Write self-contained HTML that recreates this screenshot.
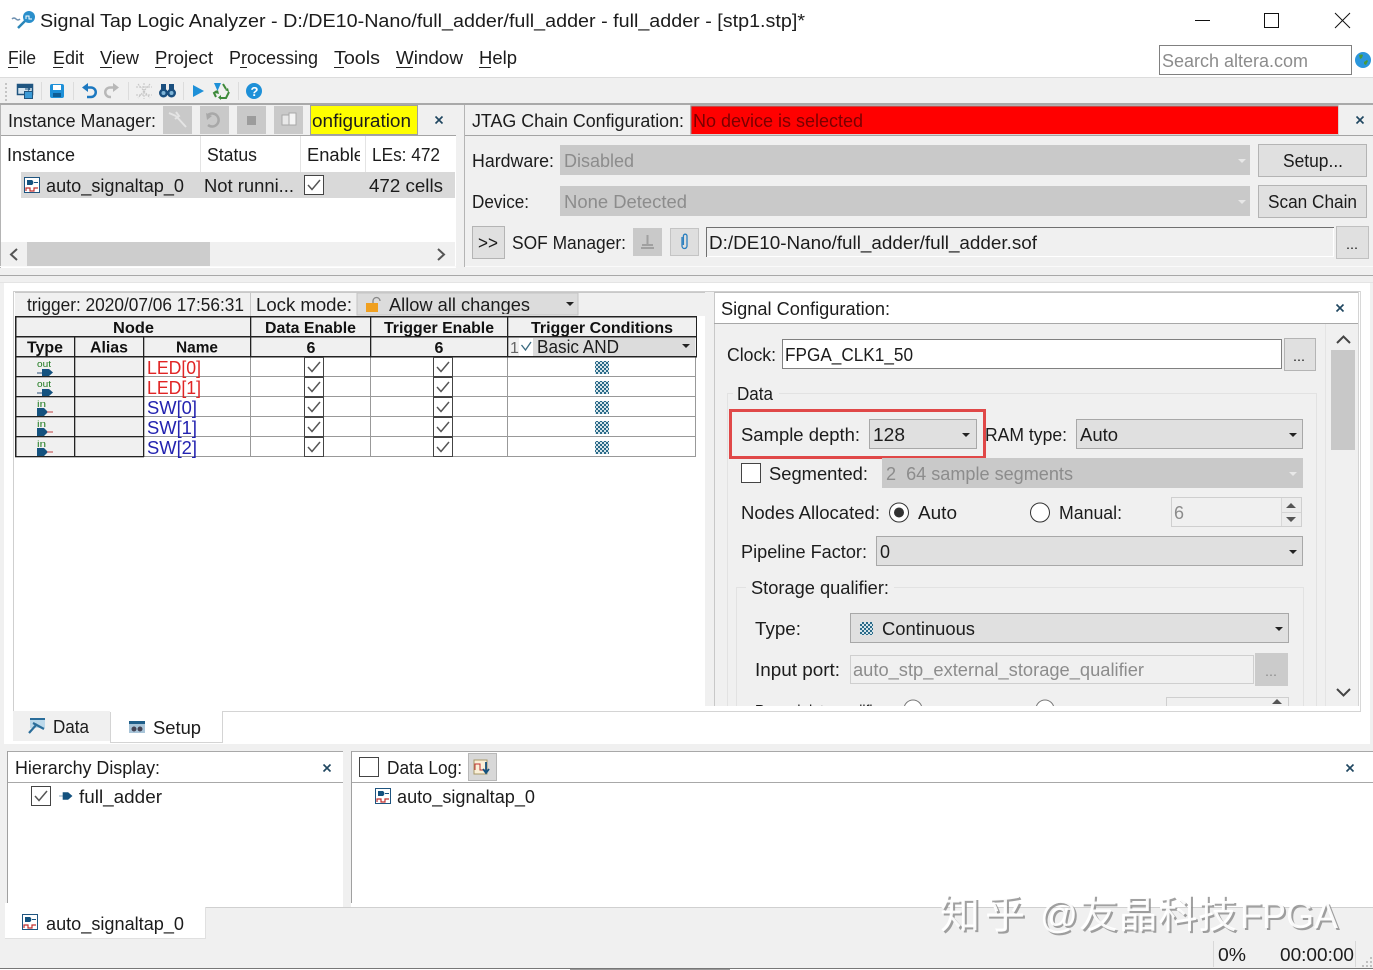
<!DOCTYPE html>
<html lang="en">
<head>
<meta charset="utf-8">
<title>Signal Tap Logic Analyzer</title>
<style>
html,body{margin:0;padding:0;background:#f0f0f0;width:1373px;height:970px;overflow:hidden}
svg{display:block}
text{font-family:"Liberation Sans","Noto Sans CJK SC",sans-serif;font-size:18px;fill:#1c1c1c}
.b{font-weight:bold;font-size:16px;fill:#111}
.d{fill:#8c8c8c}
.r{fill:#e02525}
.u{fill:#2323b0}
.s{font-size:9px;fill:#1f7a1f}
</style>
</head>
<body>
<svg xmlns="http://www.w3.org/2000/svg" width="1373" height="970" viewBox="0 0 1373 970">
<defs>
<pattern id="pt" width="4" height="4" patternUnits="userSpaceOnUse">
<rect width="4" height="4" fill="#d6e4ea"/><rect width="2" height="2" fill="#2a6a88"/><rect x="2" y="2" width="2" height="2" fill="#2a6a88"/>
</pattern>
<symbol id="st" width="16" height="16" viewBox="0 0 16 16">
<rect x=".5" y=".5" width="15" height="15" fill="#fff" stroke="#1f5580"/>
<path d="M3 3H8A3 3 0 0 1 8 8H3Z" fill="#14527f"/><path d="M10 5.500H14" stroke="#14527f"/>
<path d="M2 14V11H6V14H10V11H14" fill="none" stroke="#c0302f" stroke-width="1.200"/>
</symbol>
<symbol id="chk" width="20" height="20" viewBox="0 0 20 20">
<rect x=".5" y=".5" width="19" height="19" fill="#fff" stroke="#444"/>
<path d="M4 10L8 14.500L16 5" fill="none" stroke="#555" stroke-width="1.500"/>
</symbol>
<symbol id="x" width="10" height="10" viewBox="0 0 10 10">
<path d="M1.500 1.500L8.500 8.500M8.500 1.500L1.500 8.500" stroke="#1f4660" stroke-width="1.600"/>
</symbol>
<clipPath id="c1"><rect x="357" y="293" width="221" height="21"/></clipPath>
<clipPath id="c2"><rect x="714" y="324" width="620" height="382"/></clipPath>
<clipPath id="c3"><rect x="307" y="140" width="53" height="30"/></clipPath>
</defs>

<!-- base -->
<rect width="1373" height="970" fill="#f0f0f0"/>
<rect width="1373" height="77" fill="#fff"/>
<rect y="77" width="1373" height="1" fill="#dcdcdc"/>

<!-- title bar -->
<g fill="none">
<path d="M12 19q2-2 4 0t4 0" stroke="#6d8fb0" stroke-width="1.500"/>
<path d="M18 28L25 21" stroke="#2b86b8" stroke-width="2.500"/>
<circle cx="29" cy="17" r="6" fill="#2a8fcb"/>
<path d="M26 19V16H29V19H32" stroke="#fff"/>
</g>
<text x="40" y="27" textLength="765" lengthAdjust="spacingAndGlyphs">Signal Tap Logic Analyzer - D:/DE10-Nano/full_adder/full_adder - full_adder - [stp1.stp]*</text>
<path d="M1195 20.500H1210" stroke="#111"/>
<rect x="1264.500" y="13.500" width="14" height="14" fill="none" stroke="#111"/>
<path d="M1335 13L1350 28M1350 13L1335 28" stroke="#111"/>

<!-- menu -->
<text x="8" y="64" textLength="28" lengthAdjust="spacingAndGlyphs">File</text>
<text x="53" y="64" textLength="31" lengthAdjust="spacingAndGlyphs">Edit</text>
<text x="100" y="64" textLength="39" lengthAdjust="spacingAndGlyphs">View</text>
<text x="155" y="64" textLength="58" lengthAdjust="spacingAndGlyphs">Project</text>
<text x="229" y="64" textLength="89" lengthAdjust="spacingAndGlyphs">Processing</text>
<text x="334" y="64" textLength="46" lengthAdjust="spacingAndGlyphs">Tools</text>
<text x="396" y="64" textLength="67" lengthAdjust="spacingAndGlyphs">Window</text>
<text x="479" y="64" textLength="38" lengthAdjust="spacingAndGlyphs">Help</text>
<g fill="#222">
<rect x="8" y="67" width="10" height="1"/><rect x="53" y="67" width="10" height="1"/><rect x="100" y="67" width="12" height="1"/><rect x="155" y="67" width="11" height="1"/><rect x="240" y="67" width="7" height="1"/><rect x="334" y="67" width="10" height="1"/><rect x="396" y="67" width="17" height="1"/><rect x="479" y="67" width="12" height="1"/>
</g>
<rect x="1159.500" y="45.500" width="192" height="29" fill="#fff" stroke="#808080"/>
<text class="d" x="1162" y="67" textLength="146" lengthAdjust="spacingAndGlyphs">Search altera.com</text>
<circle cx="1363" cy="60" r="8" fill="#2a96dc"/>
<path d="M1359 55q3-1 4 0l-1 3-2 1zM1364 62l3-2 1 1-2 4-2-1z" fill="#4a9a3a"/>

<!-- toolbar -->
<g fill="#c4c4c4"><rect x="5" y="83" width="2" height="2"/><rect x="5" y="87" width="2" height="2"/><rect x="5" y="91" width="2" height="2"/><rect x="5" y="95" width="2" height="2"/><rect x="5" y="99" width="2" height="2"/></g>
<g fill="#dcdcdc"><rect x="41" y="82" width="1" height="18"/><rect x="73" y="82" width="1" height="18"/><rect x="128" y="82" width="1" height="18"/><rect x="183" y="82" width="1" height="18"/><rect x="238" y="82" width="1" height="18"/></g>
<rect x="17.500" y="84.500" width="15" height="10" fill="#d5e4ee" stroke="#1f5580" stroke-width="1.500"/>
<rect x="18" y="85" width="14" height="3" fill="#1f5580"/>
<rect x="24.500" y="91.500" width="8" height="7" fill="#3b9ad5" stroke="#1f5580"/>
<path d="M25 89h5m-2-1.500l2 1.500-2 1.500" stroke="#1f5580" fill="none"/>
<rect x="50" y="84" width="14" height="14" rx="2" fill="#1e90d8"/><rect x="53" y="85" width="8" height="5" fill="#fff"/><rect x="53" y="93" width="8" height="4" fill="#0e5d95"/>
<path d="M86 87.500H91A4.500 4.500 0 0 1 91 97H87" fill="none" stroke="#1c78c0" stroke-width="2.500"/><path d="M82 87.500L88 83V92Z" fill="#1c78c0"/>
<path d="M115 87.500H110A4.500 4.500 0 0 0 110 97H111" fill="none" stroke="#b8b8b8" stroke-width="2.500"/><path d="M119 87.500L113 83V92Z" fill="#b8b8b8"/>
<path d="M144 83V99M136 87H152M136 95H152M138 84L150 98M150 84L138 98" stroke="#c4c4c4" stroke-dasharray="2 1" fill="none"/>
<rect x="161" y="84" width="5" height="7" fill="#1a4f7f"/><rect x="169" y="84" width="5" height="7" fill="#1a4f7f"/><circle cx="163.500" cy="93" r="4.500" fill="#1a4f7f"/><circle cx="171.500" cy="93" r="4.500" fill="#1a4f7f"/><circle cx="163.500" cy="93" r="2" fill="#7fb5d8"/><circle cx="171.500" cy="93" r="2" fill="#7fb5d8"/>
<path d="M193 85L204 91L193 97Z" fill="#1e90d8"/>
<path d="M214 83H221L217.500 91Z" fill="#1e90d8"/>
<path d="M223 84L226 89M229 92L226 98H221M216 97L214 93L217 91" fill="none" stroke="#3e8a3a" stroke-width="2"/>
<path d="M225 90l3-2 1 4zM221 95v5l-3-2.500zM219 94l-4-1 3-3z" fill="#3e8a3a"/>
<circle cx="254" cy="91" r="8" fill="#1e90d8"/>
<text x="250.500" y="96" style="font-size:13px;font-weight:bold;fill:#fff">?</text>

<rect y="103" width="1373" height="2" fill="#a9a9a9"/>

<!-- instance manager -->
<rect x="0" y="105" width="456" height="163" fill="#fff"/>
<rect x="0" y="105" width="456" height="30" fill="#f0f0f0"/>
<rect y="135" width="456" height="1" fill="#a4a4a4"/>
<rect y="105" width="1" height="163" fill="#b4b4b4"/>
<text x="8" y="127" textLength="148" lengthAdjust="spacingAndGlyphs">Instance Manager:</text>
<g fill="#c9c9c9"><rect x="163" y="106" width="29" height="28"/><rect x="200" y="106" width="29" height="28"/><rect x="237" y="106" width="29" height="28"/><rect x="274" y="106" width="29" height="28"/></g>
<path d="M169 113L176 116M176 116L186 127M176 112l3 4-4 3" stroke="#e4e4e4" stroke-width="2" fill="none"/>
<path d="M208 115A6.500 6.500 0 1 1 208 125" stroke="#a8a8a8" stroke-width="2.500" fill="none"/><path d="M206 113L212 116L207 120Z" fill="#a8a8a8"/>
<rect x="247" y="116" width="9" height="9" fill="#9c9c9c"/>
<rect x="282" y="115" width="7" height="10" fill="#e8e8e8" stroke="#a8a8a8"/><rect x="289" y="113" width="7" height="12" fill="#f4f4f4" stroke="#a8a8a8"/>
<rect x="310.500" y="105.500" width="107" height="29" fill="#ffff00" stroke="#a0a0a0"/>
<text x="312" y="127" textLength="99" lengthAdjust="spacingAndGlyphs">onfiguration</text>
<use href="#x" x="434" y="115"/>
<g fill="#e4e4e4"><rect x="200" y="136" width="1" height="36"/><rect x="300" y="136" width="1" height="36"/><rect x="365" y="136" width="1" height="36"/></g>
<text x="7" y="161" textLength="68" lengthAdjust="spacingAndGlyphs">Instance</text>
<text x="207" y="161" textLength="50" lengthAdjust="spacingAndGlyphs">Status</text>
<g clip-path="url(#c3)"><text x="307" y="161" textLength="57" lengthAdjust="spacingAndGlyphs">Enable</text></g>
<text x="372" y="161" textLength="68" lengthAdjust="spacingAndGlyphs">LEs: 472</text>
<rect x="21" y="172" width="434" height="26" fill="#d9d9d9"/>
<use href="#st" x="24" y="177"/>
<text x="46" y="192" textLength="138" lengthAdjust="spacingAndGlyphs">auto_signaltap_0</text>
<text x="204" y="192" textLength="90" lengthAdjust="spacingAndGlyphs">Not runni...</text>
<use href="#chk" x="304" y="175"/>
<text x="369" y="192" textLength="74" lengthAdjust="spacingAndGlyphs">472 cells</text>
<rect x="1" y="242" width="454" height="24" fill="#f0f0f0"/>
<rect x="27" y="242" width="183" height="24" fill="#cdcdcd"/>
<path d="M17 249L11 254.500L17 260M438 249L444 254.500L438 260" fill="none" stroke="#555" stroke-width="2"/>
<rect y="266" width="456" height="1" fill="#fafafa"/>

<!-- JTAG -->
<rect x="464" y="105" width="1" height="162" fill="#b4b4b4"/>
<rect x="465" y="135" width="908" height="1" fill="#a4a4a4"/>
<rect x="465" y="266" width="908" height="1" fill="#fafafa"/>
<text x="472" y="127" textLength="212" lengthAdjust="spacingAndGlyphs">JTAG Chain Configuration:</text>
<rect x="690.500" y="105.500" width="648" height="29" fill="#ff0000" stroke="#d8d0d0"/>
<path d="M691 134V106H1338" stroke="#909090" fill="none"/>
<text x="693" y="127" textLength="170" lengthAdjust="spacingAndGlyphs" style="fill:#7a0000">No device is selected</text>
<use href="#x" x="1355" y="115"/>
<text x="472" y="167" textLength="82" lengthAdjust="spacingAndGlyphs">Hardware:</text>
<rect x="560" y="145" width="690" height="30" fill="#c9c9c9"/>
<text class="d" x="564" y="167" textLength="70" lengthAdjust="spacingAndGlyphs">Disabled</text>
<path d="M1238 159h8l-4 4z" fill="#e8e8e8"/>
<rect x="1258.500" y="144.500" width="108" height="32" fill="#e0e0e0" stroke="#b4b4b4"/>
<text x="1283" y="167" textLength="60" lengthAdjust="spacingAndGlyphs">Setup...</text>
<text x="472" y="208" textLength="57" lengthAdjust="spacingAndGlyphs">Device:</text>
<rect x="560" y="186" width="690" height="30" fill="#c9c9c9"/>
<text class="d" x="564" y="208" textLength="123" lengthAdjust="spacingAndGlyphs">None Detected</text>
<path d="M1238 200h8l-4 4z" fill="#e8e8e8"/>
<rect x="1258.500" y="185.500" width="108" height="32" fill="#e0e0e0" stroke="#b4b4b4"/>
<text x="1268" y="208" textLength="89" lengthAdjust="spacingAndGlyphs">Scan Chain</text>
<rect x="472.500" y="226.500" width="32" height="32" fill="#e0e0e0" stroke="#b4b4b4"/>
<text x="478" y="249" textLength="20" lengthAdjust="spacingAndGlyphs">&gt;&gt;</text>
<text x="512" y="249" textLength="114" lengthAdjust="spacingAndGlyphs">SOF Manager:</text>
<rect x="633" y="228" width="29" height="28" fill="#c9c9c9"/>
<path d="M647.500 235V244M642 245h11M641 248h13" stroke="#a0a0a0" stroke-width="2" fill="none"/>
<rect x="670.500" y="228.500" width="28" height="27" fill="#dedede" stroke="#c4c4c4"/>
<path d="M682 237v9a2.500 2.500 0 0 0 5 0v-10a1.800 1.800 0 0 0-3.600 0v9" fill="none" stroke="#2a7fbf" stroke-width="1.300"/>
<rect x="706.500" y="227.500" width="627" height="29" fill="#f0f0f0" stroke="#fff"/>
<path d="M706.500 257V227.500H1334" stroke="#707070" fill="none"/>
<text x="709" y="249" textLength="328" lengthAdjust="spacingAndGlyphs">D:/DE10-Nano/full_adder/full_adder.sof</text>
<rect x="1336.500" y="226.500" width="32" height="32" fill="#e0e0e0" stroke="#c0c0c0"/>
<text x="1346" y="249" textLength="12" lengthAdjust="spacingAndGlyphs" style="font-size:14px">...</text>

<rect y="275" width="1373" height="1" fill="#a8a8a8"/>
<rect y="282" width="1373" height="1" fill="#e4e4e4"/>

<!-- main pane -->
<rect x="4" y="283" width="1366" height="461" fill="#fff"/>
<rect x="13" y="291" width="1348" height="1" fill="#cfcfcf"/>
<rect x="13" y="291" width="1" height="420" fill="#cfcfcf"/>
<rect x="1360" y="291" width="1" height="420" fill="#d8d8d8"/>
<rect x="13" y="711" width="1348" height="1" fill="#d4d4d4"/>

<!-- trigger header -->
<rect x="15" y="293" width="690" height="23" fill="#f0f0f0"/>
<rect x="15" y="292" width="690" height="1" fill="#c8c8c8"/>
<text x="27" y="311" textLength="217" lengthAdjust="spacingAndGlyphs">trigger: 2020/07/06 17:56:31</text>
<rect x="250" y="293" width="1" height="23" fill="#c8c8c8"/>
<text x="256" y="311" textLength="96" lengthAdjust="spacingAndGlyphs">Lock mode:</text>
<rect x="357" y="293" width="221" height="22" fill="#dcdcdc" stroke="#c4c4c4"/>
<path d="M366 303h12v9h-12z" fill="#f0a020"/><path d="M373 303v-2a3.500 3.500 0 0 1 7 0" fill="none" stroke="#888" stroke-width="1.300"/>
<g clip-path="url(#c1)"><text x="389" y="311" textLength="141" lengthAdjust="spacingAndGlyphs">Allow all changes</text></g>
<path d="M566 302h8l-4 4z" fill="#222"/>
<rect x="705" y="292" width="9" height="414" fill="#f0f0f0"/>

<!-- table -->
<rect x="15" y="317" width="681" height="40" fill="#f0f0f0"/>
<rect x="15" y="357" width="128" height="100" fill="#f0f0f0"/>
<g fill="#999"><rect x="144" y="376" width="552" height="1"/><rect x="144" y="396" width="552" height="1"/><rect x="144" y="416" width="552" height="1"/><rect x="144" y="436" width="552" height="1"/><rect x="144" y="456" width="552" height="1"/>
<rect x="250" y="357" width="1" height="100"/><rect x="370" y="357" width="1" height="100"/><rect x="507" y="357" width="1" height="100"/><rect x="695" y="357" width="1" height="100"/></g>
<g fill="#222">
<rect x="15" y="316" width="682" height="1.500"/><rect x="15" y="336" width="682" height="1.500"/><rect x="15" y="356" width="682" height="1.500"/>
<rect x="15" y="376" width="129" height="1.300"/><rect x="15" y="396" width="129" height="1.300"/><rect x="15" y="416" width="129" height="1.300"/><rect x="15" y="436" width="129" height="1.300"/><rect x="15" y="456" width="129" height="1.300"/>
<rect x="15" y="316" width="1.500" height="141"/><rect x="74" y="337" width="1.300" height="120"/><rect x="143" y="337" width="1.300" height="120"/>
<rect x="250" y="316" width="1.300" height="41"/><rect x="370" y="316" width="1.300" height="41"/><rect x="507" y="316" width="1.300" height="41"/><rect x="696" y="316" width="1" height="41"/>
</g>
<text class="b" x="113" y="333" textLength="41" lengthAdjust="spacingAndGlyphs">Node</text>
<text class="b" x="265" y="333" textLength="91" lengthAdjust="spacingAndGlyphs">Data Enable</text>
<text class="b" x="384" y="333" textLength="110" lengthAdjust="spacingAndGlyphs">Trigger Enable</text>
<text class="b" x="531" y="333" textLength="142" lengthAdjust="spacingAndGlyphs">Trigger Conditions</text>
<text class="b" x="27" y="352.500" textLength="36" lengthAdjust="spacingAndGlyphs">Type</text>
<text class="b" x="90" y="352.500" textLength="38" lengthAdjust="spacingAndGlyphs">Alias</text>
<text class="b" x="176" y="352.500" textLength="42" lengthAdjust="spacingAndGlyphs">Name</text>
<text class="b" x="306.500" y="353">6</text>
<text class="b" x="434.500" y="353">6</text>
<text x="510" y="353" style="font-size:16px;fill:#666">1</text>
<rect x="519" y="338" width="14" height="18" fill="#fff"/>
<path d="M521.500 345L525.500 350L531 342" stroke="#3a6a80" stroke-width="1.300" fill="none"/>
<rect x="533" y="338" width="162" height="18" fill="#dcdcdc"/>
<text x="537" y="353" textLength="82" lengthAdjust="spacingAndGlyphs">Basic AND</text>
<path d="M682 344h8l-4 4z" fill="#222"/>

<g>
<text class="s" x="37" y="367" textLength="14" lengthAdjust="spacingAndGlyphs">out</text>
<path d="M37 373H43" stroke="#2a4f7a"/><path d="M42 369H49L53 372.500L49 376H42Z" fill="#14527f"/>
<text class="s" x="37" y="387" textLength="14" lengthAdjust="spacingAndGlyphs">out</text>
<path d="M37 393H43" stroke="#2a4f7a"/><path d="M42 389H49L53 392.500L49 396H42Z" fill="#14527f"/>
<text class="s" x="37" y="407" textLength="9" lengthAdjust="spacingAndGlyphs">in</text>
<path d="M37 408H44L48 412L44 416H37Z" fill="#14527f"/><path d="M47 412H53" stroke="#c04040"/>
<text class="s" x="37" y="427" textLength="9" lengthAdjust="spacingAndGlyphs">in</text>
<path d="M37 428H44L48 432L44 436H37Z" fill="#14527f"/><path d="M47 432H53" stroke="#c04040"/>
<text class="s" x="37" y="447" textLength="9" lengthAdjust="spacingAndGlyphs">in</text>
<path d="M37 448H44L48 452L44 456H37Z" fill="#14527f"/><path d="M47 452H53" stroke="#c04040"/>
</g>
<text class="r" x="147" y="374" textLength="54" lengthAdjust="spacingAndGlyphs">LED[0]</text>
<text class="r" x="147" y="394" textLength="54" lengthAdjust="spacingAndGlyphs">LED[1]</text>
<text class="u" x="147" y="414" textLength="50" lengthAdjust="spacingAndGlyphs">SW[0]</text>
<text class="u" x="147" y="434" textLength="50" lengthAdjust="spacingAndGlyphs">SW[1]</text>
<text class="u" x="147" y="454" textLength="50" lengthAdjust="spacingAndGlyphs">SW[2]</text>
<use href="#chk" x="304" y="357"/><use href="#chk" x="304" y="377"/><use href="#chk" x="304" y="397"/><use href="#chk" x="304" y="417"/><use href="#chk" x="304" y="437"/>
<use href="#chk" x="433" y="357"/><use href="#chk" x="433" y="377"/><use href="#chk" x="433" y="397"/><use href="#chk" x="433" y="417"/><use href="#chk" x="433" y="437"/>
<g fill="url(#pt)"><rect x="595" y="361" width="14" height="13"/><rect x="595" y="381" width="14" height="13"/><rect x="595" y="401" width="14" height="13"/><rect x="595" y="421" width="14" height="13"/><rect x="595" y="441" width="14" height="13"/></g>

<!-- signal config -->
<rect x="714" y="324" width="644" height="382" fill="#f0f0f0"/>
<rect x="714" y="292" width="1" height="414" fill="#c8c8c8"/>
<rect x="714" y="292" width="645" height="1" fill="#c0c0c0"/>
<rect x="714" y="323" width="645" height="1" fill="#a8a8a8"/>
<rect x="1358" y="292" width="1" height="414" fill="#d4d4d4"/>
<text x="721" y="315" textLength="169" lengthAdjust="spacingAndGlyphs">Signal Configuration:</text>
<use href="#x" x="1335" y="303"/>
<path d="M1337 343L1343.500 336.500L1350 343" fill="none" stroke="#444" stroke-width="2"/>
<rect x="1331" y="350" width="24" height="100" fill="#c8c8c8"/>
<path d="M1337 689L1343.500 695.500L1350 689" fill="none" stroke="#444" stroke-width="2"/>
<rect x="1325" y="324" width="1" height="382" fill="#e4e4e4"/>

<text x="727" y="361" textLength="49" lengthAdjust="spacingAndGlyphs">Clock:</text>
<rect x="782.500" y="339.500" width="499" height="29" fill="#fff" stroke="#808080"/>
<text x="785" y="361" textLength="128" lengthAdjust="spacingAndGlyphs">FPGA_CLK1_50</text>
<rect x="1284.500" y="338.500" width="31" height="32" fill="#e0e0e0" stroke="#b4b4b4"/>
<text x="1293" y="361" textLength="12" lengthAdjust="spacingAndGlyphs" style="font-size:14px">...</text>

<path d="M727.500 706V393.500H1316.500V706" fill="none" stroke="#e2e2e2"/>
<rect x="733" y="388" width="46" height="12" fill="#f0f0f0"/>
<text x="737" y="400" textLength="36" lengthAdjust="spacingAndGlyphs">Data</text>

<text x="741" y="441" textLength="119" lengthAdjust="spacingAndGlyphs">Sample depth:</text>
<rect x="869.500" y="419.500" width="107" height="29" fill="#e0e0e0" stroke="#a8a8a8"/>
<text x="873" y="441" textLength="32" lengthAdjust="spacingAndGlyphs">128</text>
<path d="M962 433h8l-4 4z" fill="#222"/>
<rect x="730.500" y="410.500" width="254" height="47" fill="none" stroke="#e04848" stroke-width="3"/>
<text x="985" y="441" textLength="82" lengthAdjust="spacingAndGlyphs">RAM type:</text>
<rect x="1076.500" y="419.500" width="226" height="29" fill="#e0e0e0" stroke="#a8a8a8"/>
<text x="1080" y="441" textLength="38" lengthAdjust="spacingAndGlyphs">Auto</text>
<path d="M1289 433h8l-4 4z" fill="#222"/>

<rect x="741.500" y="463.500" width="19" height="19" fill="#fff" stroke="#444"/>
<text x="769" y="480" textLength="99" lengthAdjust="spacingAndGlyphs">Segmented:</text>
<rect x="882" y="458" width="421" height="30" fill="#c9c9c9"/>
<text class="d" x="886" y="480" textLength="187" lengthAdjust="spacingAndGlyphs" xml:space="preserve">2  64 sample segments</text>
<path d="M1289 472h8l-4 4z" fill="#e8e8e8"/>

<text x="741" y="519" textLength="139" lengthAdjust="spacingAndGlyphs">Nodes Allocated:</text>
<circle cx="899" cy="512.500" r="9.500" fill="#fff" stroke="#333"/><circle cx="899" cy="512.500" r="5" fill="#333"/>
<text x="918" y="519" textLength="39" lengthAdjust="spacingAndGlyphs">Auto</text>
<circle cx="1040" cy="512.500" r="9.500" fill="#fff" stroke="#333"/>
<text x="1059" y="519" textLength="63" lengthAdjust="spacingAndGlyphs">Manual:</text>
<rect x="1171.500" y="497.500" width="130" height="29" fill="#f0f0f0" stroke="#cfcfcf"/>
<text class="d" x="1174" y="519">6</text>
<rect x="1281" y="498" width="20" height="28" fill="#ececec"/><rect x="1281" y="512" width="20" height="1" fill="#d4d4d4"/><rect x="1281" y="498" width="1" height="28" fill="#d8d8d8"/>
<path d="M1291 503l5 5h-10zM1291 522l5-5h-10z" fill="#555"/>

<text x="741" y="558" textLength="126" lengthAdjust="spacingAndGlyphs">Pipeline Factor:</text>
<rect x="876.500" y="536.500" width="426" height="29" fill="#e0e0e0" stroke="#a8a8a8"/>
<text x="880" y="558">0</text>
<path d="M1289 550h8l-4 4z" fill="#222"/>

<path d="M736.500 706V587.500H1303.500V706" fill="none" stroke="#e2e2e2"/>
<rect x="746" y="580" width="148" height="16" fill="#f0f0f0"/>
<text x="751" y="594" textLength="138" lengthAdjust="spacingAndGlyphs">Storage qualifier:</text>
<text x="755" y="635" textLength="46" lengthAdjust="spacingAndGlyphs">Type:</text>
<rect x="850.500" y="613.500" width="438" height="29" fill="#e0e0e0" stroke="#a8a8a8"/>
<rect x="860" y="622" width="13" height="13" fill="url(#pt)"/>
<text x="882" y="635" textLength="93" lengthAdjust="spacingAndGlyphs">Continuous</text>
<path d="M1275 627h8l-4 4z" fill="#222"/>
<text x="755" y="676" textLength="85" lengthAdjust="spacingAndGlyphs">Input port:</text>
<rect x="850.500" y="655.500" width="403" height="28" fill="#f0f0f0" stroke="#cfcfcf"/>
<text class="d" x="853" y="676" textLength="291" lengthAdjust="spacingAndGlyphs">auto_stp_external_storage_qualifier</text>
<rect x="1255" y="653" width="33" height="33" fill="#cbcbcb"/>
<text x="1265" y="676" textLength="12" lengthAdjust="spacingAndGlyphs" style="font-size:14px;fill:#8c8c8c">...</text>
<g clip-path="url(#c2)">
<text x="755" y="718" textLength="134" lengthAdjust="spacingAndGlyphs">Record data qualifier:</text>
<circle cx="913" cy="709" r="9" fill="#fff" stroke="#777"/>
<circle cx="1045" cy="709" r="9" fill="#fff" stroke="#777"/>
<rect x="1166.500" y="697.500" width="122" height="20" fill="#f0f0f0" stroke="#cfcfcf"/>
<path d="M1277 699l5 5h-10z" fill="#555"/>
</g>
<rect x="714" y="706" width="645" height="5" fill="#fff"/>

<!-- tabs -->
<rect x="13" y="711" width="97" height="30" fill="#f0f0f0"/>
<rect x="110" y="711" width="112" height="32" fill="#fff"/>
<path d="M110.500 712V742.500H222.500V712" fill="none" stroke="#d4d4d4"/>
<rect x="30" y="718" width="15" height="10" fill="#bcd8ea"/>
<rect x="30" y="718" width="15" height="2" fill="#2a6d9a"/>
<path d="M29 733L37 724M33 723L44 729" stroke="#2a6d9a" stroke-width="2.200" fill="none"/>
<text x="53" y="733" textLength="36" lengthAdjust="spacingAndGlyphs">Data</text>
<rect x="129" y="721" width="16" height="3" fill="#1f5f8a"/><rect x="129" y="724" width="16" height="9" fill="#a8c4d8"/>
<circle cx="134" cy="729" r="2.500" fill="#445"/><circle cx="140" cy="729" r="2.500" fill="#445"/>
<text x="153" y="734" textLength="48" lengthAdjust="spacingAndGlyphs">Setup</text>

<!-- bottom panels -->
<rect x="0" y="744" width="1373" height="163" fill="#f0f0f0"/>
<rect x="7" y="751" width="336" height="156" fill="#fff"/>
<rect x="351" y="751" width="1022" height="156" fill="#fff"/>
<rect x="7" y="751" width="336" height="1" fill="#a8a8a8"/>
<rect x="351" y="751" width="1022" height="1" fill="#a8a8a8"/>
<rect x="7" y="782" width="336" height="1" fill="#a8a8a8"/>
<rect x="351" y="782" width="1022" height="1" fill="#a8a8a8"/>
<rect x="7" y="751" width="1" height="152" fill="#a0a0a0"/>
<rect x="351" y="751" width="1" height="152" fill="#a0a0a0"/>
<text x="15" y="774" textLength="145" lengthAdjust="spacingAndGlyphs">Hierarchy Display:</text>
<use href="#x" x="322" y="763"/>
<use href="#chk" x="31" y="786"/>
<path d="M59 796H63M63 792.500H68L72 796L68 799.500H63Z" fill="#14527f" stroke="#14527f" stroke-width=".6"/>
<text x="79" y="803" textLength="83" lengthAdjust="spacingAndGlyphs">full_adder</text>
<rect x="359.500" y="757.500" width="19" height="19" fill="#fff" stroke="#444"/>
<text x="387" y="774" textLength="75" lengthAdjust="spacingAndGlyphs">Data Log:</text>
<rect x="468.500" y="753.500" width="28" height="27" fill="#d8d8d8" stroke="#b8b8b8"/>
<rect x="474" y="760" width="13" height="14" fill="#faf0d8" stroke="#a89868"/>
<path d="M475 770V764H480V770H485" stroke="#c03030" fill="none"/>
<path d="M486 762V772M483 769L486 773L489 769" stroke="#14527f" stroke-width="1.800" fill="none"/>
<use href="#x" x="1345" y="763"/>
<use href="#st" x="375" y="788"/>
<text x="397" y="803" textLength="138" lengthAdjust="spacingAndGlyphs">auto_signaltap_0</text>

<!-- bottom tab + status -->
<rect x="0" y="907" width="1373" height="61" fill="#f0f0f0"/>
<rect x="205" y="907" width="1168" height="1" fill="#d0d0d0"/>
<rect x="5" y="903" width="200" height="35" fill="#fff"/>
<path d="M205.500 907V938.500H5" fill="none" stroke="#e0e0e0"/>
<use href="#st" x="22" y="914"/>
<text x="46" y="930" textLength="138" lengthAdjust="spacingAndGlyphs">auto_signaltap_0</text>
<rect x="1213" y="941" width="1" height="26" fill="#d8d8d8"/>
<rect x="1355" y="941" width="1" height="26" fill="#d8d8d8"/>
<text x="1218" y="961" textLength="28" lengthAdjust="spacingAndGlyphs">0%</text>
<text x="1280" y="961" textLength="74" lengthAdjust="spacingAndGlyphs">00:00:00</text>
<g fill="#c0c0c0"><rect x="1370" y="957" width="2" height="2"/><rect x="1366" y="961" width="2" height="2"/><rect x="1370" y="961" width="2" height="2"/><rect x="1362" y="965" width="2" height="2"/><rect x="1366" y="965" width="2" height="2"/><rect x="1370" y="965" width="2" height="2"/></g>
<rect y="968" width="1373" height="1" fill="#777"/>
<rect y="969" width="1373" height="1" fill="#fff"/>
<rect x="570" y="969" width="160" height="1" fill="#999"/>

<!-- watermark -->
<g style="fill-opacity:.8">
<text x="942" y="930" textLength="85" style="font-size:40px;fill:#8a8a8a">知乎</text>
<text x="1042" y="930" textLength="38" lengthAdjust="spacingAndGlyphs" style="font-size:38px;fill:#8a8a8a">@</text>
<text x="1081" y="930" textLength="158" style="font-size:39px;fill:#8a8a8a">友晶科技</text>
<text x="1242" y="930" textLength="98" lengthAdjust="spacingAndGlyphs" style="font-size:37px;fill:#8a8a8a">FPGA</text>
</g>
<g style="fill-opacity:.94">
<text x="940" y="928" textLength="85" style="font-size:40px;fill:#fff">知乎</text>
<text x="1040" y="928" textLength="38" lengthAdjust="spacingAndGlyphs" style="font-size:38px;fill:#fff">@</text>
<text x="1079" y="928" textLength="158" style="font-size:39px;fill:#fff">友晶科技</text>
<text x="1240" y="928" textLength="98" lengthAdjust="spacingAndGlyphs" style="font-size:37px;fill:#fff">FPGA</text>
</g>
</svg>
</body>
</html>
